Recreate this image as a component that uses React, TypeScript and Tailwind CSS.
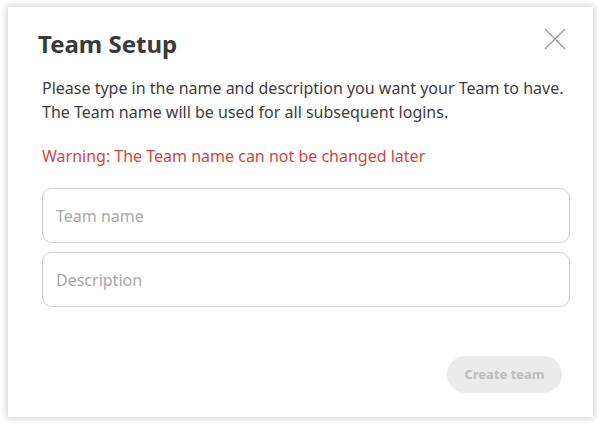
import { useState } from "react";

function CloseIcon() {
  return (
    <svg width="22" height="22" viewBox="0 0 22 22" fill="none">
      <path d="M1 1L21 21M21 1L1 21" stroke="#9a9a9a" strokeWidth="1.2" />
    </svg>
  );
}

export default function App() {
  const [name, setName] = useState("");
  const [description, setDescription] = useState("");

  return (
    <div
      className="min-h-screen bg-white pl-[8px] pt-[7px]"
      style={{ fontFamily: '"Noto Sans", "Open Sans", sans-serif' }}
    >
      <div className="relative flex h-[410px] w-[585px] flex-col bg-white shadow-[0_0_6px_2px_rgba(0,0,0,0.16)]">
        <button className="absolute right-[27px] top-[21px]">
          <CloseIcon />
        </button>

        <h2 className="pl-[30px] pt-[20px] text-[24px] leading-[34px] font-bold text-[#3a3a3a]">
          Team Setup
        </h2>

        <div className="flex flex-1 flex-col px-[34px] pt-[15px]">
          <p className="whitespace-nowrap text-[16px] leading-[24px] text-[#3d3d3d]">
            Please type in the name and description you want your Team to have.
            <br />
            The Team name will be used for all subsequent logins.
          </p>
          <p className="mt-[20px] text-[16px] leading-[24px] text-[#d4463f]">
            Warning: The Team name can not be changed later
          </p>

          <div className="mt-[20px] flex w-[528px] flex-col gap-[9px]">
            <input
              value={name}
              onChange={(e) => setName(e.target.value)}
              placeholder="Team name"
              className="h-[55px] rounded-[10px] border border-[#cfcfcf] px-[13px] text-[16px] text-[#3a3a3a] outline-none placeholder:text-[#a8a8a8]"
            />
            <input
              value={description}
              onChange={(e) => setDescription(e.target.value)}
              placeholder="Description"
              className="h-[55px] rounded-[10px] border border-[#cfcfcf] px-[13px] text-[16px] text-[#3a3a3a] outline-none placeholder:text-[#a8a8a8]"
            />
          </div>

          <div className="mt-[49px] flex w-[520px] justify-end">
            <button
              disabled={!name}
              className="h-[37px] w-[115px] rounded-full bg-[#ebebeb] text-[13px] font-bold text-[#bdbdbd]"
            >
              Create team
            </button>
          </div>
        </div>
      </div>
    </div>
  );
}
